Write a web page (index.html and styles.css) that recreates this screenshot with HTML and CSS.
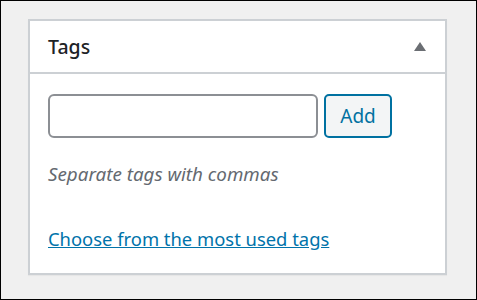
FILE: index.html
```html
<!DOCTYPE html>
<html lang="en">
<head>
    <meta charset="UTF-8">
    <title>Tags</title>
    <link rel="stylesheet" href="styles.css">
</head>
<body>
    <div class="frame">
        <div class="postbox">
            <div class="postbox-header">
                <h2 class="hndle">Tags</h2>
                <button class="handle-toggle" type="button" aria-label="Toggle panel: Tags">
                    <svg width="12" height="9" viewBox="0 0 12 9"><polygon points="6,0 12,9 0,9" fill="#6b6e73"/></svg>
                </button>
            </div>
            <div class="inside">
                <div class="tag-add">
                    <input type="text" class="new-tag" aria-label="Add New Tag">
                    <button class="button" type="button">Add</button>
                </div>
                <p class="howto">Separate tags with commas</p>
                <p class="tagcloud-link"><a href="#">Choose from the most used tags</a></p>
            </div>
        </div>
    </div>
</body>
</html>
```

FILE: styles.css
```css
* {
    box-sizing: border-box;
}

body {
    margin: 0;
    font-family: "Noto Sans", "Open Sans", sans-serif;
}

.frame {
    width: 477px;
    height: 300px;
    border: 1px solid #000;
    background-color: #f0f0f0;
    padding: 18px 0 0 27px;
}

.postbox {
    width: 419px;
    height: 256px;
    background-color: #fff;
    border: 2px solid #ccd0d4;
    box-shadow: 0 1px 1px rgba(0, 0, 0, 0.04);
}

.postbox-header {
    height: 53px;
    border-bottom: 2px solid #ccd0d4;
    display: flex;
    align-items: center;
    justify-content: space-between;
    padding: 0 18px 0 18px;
}

.hndle {
    margin: 0;
    font-size: 19.5px;
    font-weight: 500;
    color: #1d2327;
}

.handle-toggle {
    border: 0;
    background: none;
    padding: 0;
    margin-right: 1px;
    display: flex;
}

.inside {
    padding: 20px 18px 0 18px;
}

.tag-add {
    display: flex;
    gap: 6px;
}

.new-tag {
    width: 270px;
    height: 44px;
    border: 2px solid #8c8f94;
    border-radius: 6px;
    margin: 0;
}

.button {
    width: 68px;
    height: 44px;
    border: 2px solid #0071a1;
    border-radius: 5px;
    background-color: #f3f5f6;
    color: #0071a1;
    font-family: inherit;
    font-size: 19px;
    padding: 0;
}

.howto {
    margin: 23px 0 0 0;
    font-size: 18.8px;
    font-style: italic;
    color: #646970;
}

.tagcloud-link {
    margin: 39px 0 0 0;
    font-size: 18.4px;
}

.tagcloud-link a {
    color: #0073aa;
}
```
